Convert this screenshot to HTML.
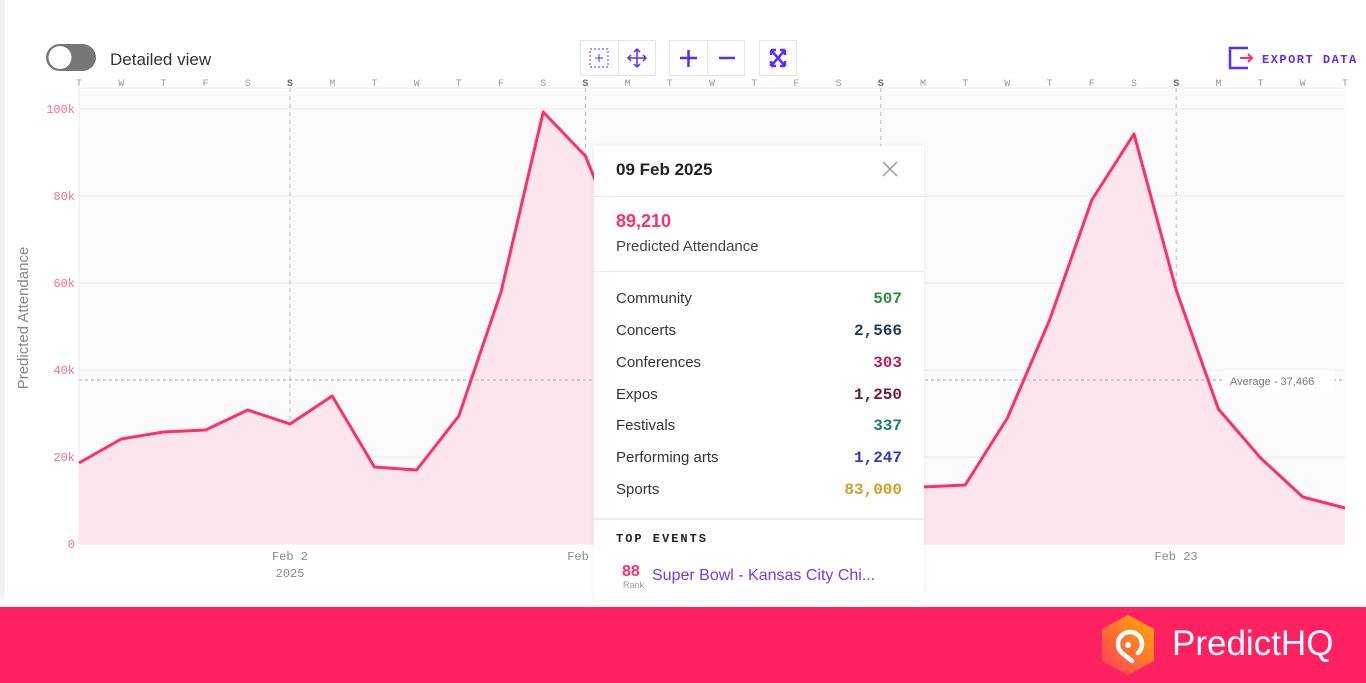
<!DOCTYPE html>
<html><head><meta charset="utf-8"><style>
body{margin:0;width:1366px;height:683px;overflow:hidden;background:#fff;font-family:"Liberation Sans",sans-serif;position:relative}
.abs{position:absolute}
.mono{font-family:"Liberation Mono",monospace}
.tt{position:absolute;left:594px;top:146px;width:330px;height:454px;background:#fff;box-shadow:0 0 6px rgba(0,0,0,0.06)}
.row{position:absolute;left:22px;right:22px;height:20px;font-size:15px;color:#333}
.row b{position:absolute;right:0;font-family:"Liberation Mono",monospace;font-size:16px}
.btn{position:absolute;top:40px;height:36px;border:1px solid #e4e4e4;background:#fff;box-sizing:border-box}
</style></head><body>
<div class="abs" style="left:0;top:0;width:5px;height:600px;background:#f3f3f3"></div>
<div class="abs" style="left:0;top:598px;width:1366px;height:9px;background:#fff"></div>
<svg class="abs" style="left:0;top:0" width="1366" height="607">
<rect x="79" y="88" width="1266" height="456" fill="#fafafa"/>
<g stroke="#ececec" stroke-width="1">
<line x1="79" x2="1345" y1="109" y2="109"/><line x1="79" x2="1345" y1="196" y2="196"/><line x1="79" x2="1345" y1="283" y2="283"/><line x1="79" x2="1345" y1="370" y2="370"/><line x1="79" x2="1345" y1="457" y2="457"/><line x1="79" x2="1345" y1="544" y2="544"/>
<line x1="79" x2="1345" y1="88" y2="88"/><line x1="79" x2="79" y1="88" y2="544"/>
</g>
<g stroke="#bbb" stroke-dasharray="4,4"><line x1="290" x2="290" y1="88" y2="544"/><line x1="585.4" x2="585.4" y1="88" y2="544"/><line x1="880.8" x2="880.8" y1="88" y2="544"/><line x1="1176.2" x2="1176.2" y1="88" y2="544"/></g>
<polygon fill="#fce6ec" points="79,544 79,463 121.2,439 163.4,432 205.6,430 247.8,410 290,424 332.2,396 374.4,467 416.6,470 458.8,416 501,292 543.2,112 585.4,156 627.6,260 669.8,400 712,460 754.2,480 796.4,485 838.6,488 880.8,487 923,487 965.2,485 1007.4,418 1049.6,320 1091.8,200 1134,134 1176.2,290 1218.4,409 1260.6,458 1302.8,497 1345,508 1345,544"/>
<line x1="79" x2="1345" y1="380" y2="380" stroke="#aaa" stroke-dasharray="3,3"/>
<polyline fill="none" stroke="#ff2f6b" stroke-width="3" stroke-linejoin="round" points="79,463 121.2,439 163.4,432 205.6,430 247.8,410 290,424 332.2,396 374.4,467 416.6,470 458.8,416 501,292 543.2,112 585.4,156 627.6,260 669.8,400 712,460 754.2,480 796.4,485 838.6,488 880.8,487 923,487 965.2,485 1007.4,418 1049.6,320 1091.8,200 1134,134 1176.2,290 1218.4,409 1260.6,458 1302.8,497 1345,508"/>
<rect x="1224" y="370" width="110" height="22" fill="#fff"/>
<text x="1230" y="385" font-size="11" fill="#777" font-family="Liberation Sans">Average - 37,466</text>
<g font-family="Liberation Mono" font-size="12" fill="#ff6b93" text-anchor="end">
<text x="75" y="113">100k</text><text x="75" y="200">80k</text><text x="75" y="287">60k</text><text x="75" y="374">40k</text><text x="75" y="461">20k</text><text x="75" y="548">0</text></g>
<text transform="translate(28,318) rotate(-90)" font-size="15" fill="#888" text-anchor="middle">Predicted Attendance</text>
<g font-family="Liberation Mono" font-size="12" fill="#888" text-anchor="middle">
<text x="290" y="560">Feb 2</text><text x="290" y="577">2025</text><text x="578" y="560">Feb</text><text x="1176" y="560">Feb 23</text></g>
<g font-family="Liberation Mono" font-size="10" fill="#999" text-anchor="middle">
<text x="79" y="86">T</text><text x="121.2" y="86">W</text><text x="163.4" y="86">T</text><text x="205.6" y="86">F</text><text x="247.8" y="86">S</text><text x="290" y="86" font-weight="bold" fill="#666">S</text><text x="332.2" y="86">M</text><text x="374.4" y="86">T</text><text x="416.6" y="86">W</text><text x="458.8" y="86">T</text><text x="501" y="86">F</text><text x="543.2" y="86">S</text><text x="585.4" y="86" font-weight="bold" fill="#666">S</text><text x="627.6" y="86">M</text><text x="669.8" y="86">T</text><text x="712" y="86">W</text><text x="754.2" y="86">T</text><text x="796.4" y="86">F</text><text x="838.6" y="86">S</text><text x="880.8" y="86" font-weight="bold" fill="#666">S</text><text x="923" y="86">M</text><text x="965.2" y="86">T</text><text x="1007.4" y="86">W</text><text x="1049.6" y="86">T</text><text x="1091.8" y="86">F</text><text x="1134" y="86">S</text><text x="1176.2" y="86" font-weight="bold" fill="#666">S</text><text x="1218.4" y="86">M</text><text x="1260.6" y="86">T</text><text x="1302.8" y="86">W</text><text x="1345" y="86">T</text></g>
<!-- toggle -->
<rect x="46" y="44" width="50" height="27" rx="13.5" fill="#777"/>
<circle cx="60" cy="57.5" r="11.5" fill="#fff"/>
<text x="110" y="65" font-size="17" fill="#333">Detailed view</text>
<!-- export -->
<path d="M1248 48 H1230 V68 H1248" fill="none" stroke="#5b2cf5" stroke-width="2.5"/>
<path d="M1240 58 H1252 M1248 54 L1252 58 L1248 62" fill="none" stroke="#ff2f6b" stroke-width="2"/>
<text x="1262" y="63" font-family="Liberation Mono" font-weight="bold" font-size="12" fill="#5b2cf5" letter-spacing="1.5">EXPORT DATA</text>
</svg>
<div class="btn" style="left:580px;width:76px"><div style="position:absolute;left:37px;top:0;width:1px;height:34px;background:#e4e4e4"></div>
<svg width="76" height="34"><rect x="9" y="8" width="18" height="18" fill="none" stroke="#5b2cf5" stroke-dasharray="2,2"/><path d="M14 17h8M18 13v8" stroke="#5b2cf5"/><path d="M56 8v18M47 17h18M53 11l3-3 3 3M53 23l3 3 3-3M50 14l-3 3 3 3M62 14l3 3-3 3" fill="none" stroke="#5b2cf5" stroke-width="1.5"/></svg></div>
<div class="btn" style="left:669px;width:76px"><div style="position:absolute;left:37px;top:0;width:1px;height:34px;background:#e4e4e4"></div>
<svg width="76" height="34"><path d="M10 17h17M18.5 9v17M49 17h16" stroke="#5b2cf5" stroke-width="2.5"/></svg></div>
<div class="btn" style="left:759px;width:38px"><svg width="36" height="34"><path d="M11 9l14 16M25 9L11 25M11 9h5M11 9v5M25 25h-5M25 25v-5M25 9h-5M25 9v5M11 25h5M11 25v-5" fill="none" stroke="#5b2cf5" stroke-width="2.5"/></svg></div>

<div class="tt">
<div class="abs" style="left:22px;top:14px;font-size:17px;font-weight:bold;color:#222">09 Feb 2025</div>
<svg class="abs" style="left:287px;top:14px" width="18" height="18"><path d="M2 2l14 14M16 2L2 16" stroke="#999" stroke-width="1.5"/></svg>
<div class="abs" style="left:0;top:50px;width:330px;height:1px;background:#ececec"></div>
<div class="abs" style="left:22px;top:65px;font-size:18px;font-weight:bold;color:#ff2f6b">89,210</div>
<div class="abs" style="left:22px;top:92px;font-size:15px;color:#444">Predicted Attendance</div>
<div class="abs" style="left:0;top:125px;width:330px;height:1px;background:#ececec"></div>
<div class="row" style="top:144px">Community<b style="color:#2e8b3e">507</b></div>
<div class="row" style="top:176px">Concerts<b style="color:#1f3a5f">2,566</b></div>
<div class="row" style="top:208px">Conferences<b style="color:#b0245a">303</b></div>
<div class="row" style="top:240px">Expos<b style="color:#6b1d2a">1,250</b></div>
<div class="row" style="top:271px">Festivals<b style="color:#1f7a74">337</b></div>
<div class="row" style="top:303px">Performing arts<b style="color:#2a3fa8">1,247</b></div>
<div class="row" style="top:335px">Sports<b style="color:#c9a227">83,000</b></div>
<div class="abs" style="left:0;top:372px;width:330px;height:2px;background:#ececec"></div>
<div class="abs mono" style="left:22px;top:386px;font-size:12px;font-weight:bold;color:#222;letter-spacing:2px">TOP EVENTS</div>
<div class="abs" style="left:28px;top:417px;font-size:16px;font-weight:bold;color:#ff2f6b">88</div>
<div class="abs" style="left:29px;top:434px;font-size:9px;color:#999">Rank</div>
<div class="abs" style="left:58px;top:421px;font-size:16px;color:#6b3df5">Super Bowl - Kansas City Chi...</div>
</div>

<div class="abs" style="left:0;top:607px;width:1366px;height:76px;background:#ff2161"></div>
<svg class="abs" style="left:1098px;top:613px" width="60" height="64"><defs><linearGradient id="g" x1="0" y1="1" x2="1" y2="0"><stop offset="0" stop-color="#ff3a5e"/><stop offset="1" stop-color="#ffb000"/></linearGradient></defs>
<polygon points="30,2 56,16 56,48 30,62 4,48 4,16" fill="url(#g)"/>
<path d="M34 48 L24 40 A12 12 0 1 1 40 40" fill="none" stroke="#fff" stroke-width="4.5" stroke-linecap="round"/><circle cx="30" cy="32" r="3" fill="#fff"/></svg>
<div class="abs" style="left:1172px;top:624px;font-size:35px;color:#fff">PredictHQ</div>
</body></html>
